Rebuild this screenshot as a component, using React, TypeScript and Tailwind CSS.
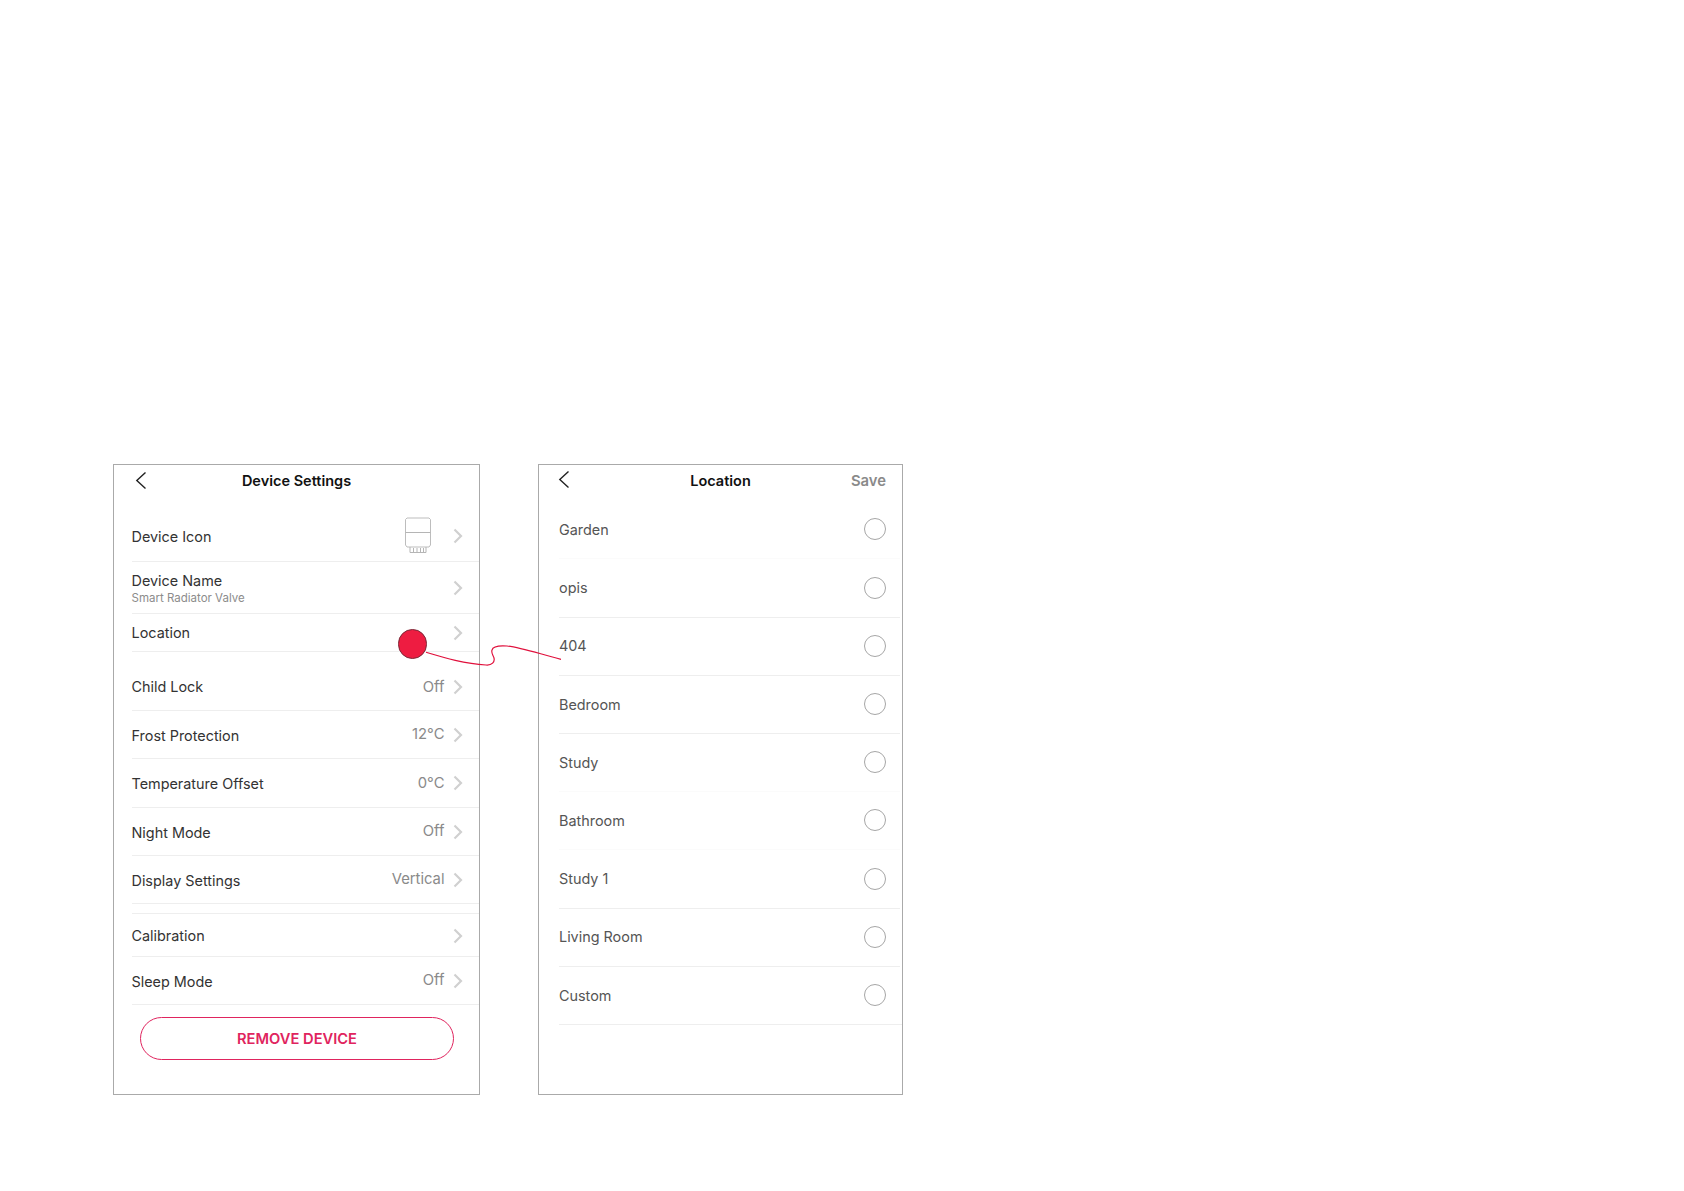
const font = "font-['Inter','Liberation_Sans',sans-serif]";

function Chevron() {
  return (
    <svg width="10" height="16" viewBox="0 0 10 16" fill="none" className="shrink-0">
      <path d="M1.500 1.500 8 8 1.500 14.500" stroke="#d0d0d0" strokeWidth="2.200" />
    </svg>
  );
}

function Back() {
  return (
    <svg width="12" height="18" viewBox="0 0 12 18" fill="none" className="shrink-0">
      <path d="M10.500 .5 1.800 8.500 10.500 16.500" stroke="#222" strokeWidth="1.400" />
    </svg>
  );
}

function ValveIcon() {
  return (
    <svg width="28" height="38" viewBox="0 0 28 38" fill="none" className="shrink-0">
      <path d="M3 1h22l1.500 1.500V28L25 30H3l-1.500-2V2.500Z" stroke="#bdbdbd" strokeWidth="1" />
      <path d="M1.500 15.500h25" stroke="#b5b5b5" strokeWidth="1" />
      <path d="M6 30v5.500h16V30M9.500 31v4M13 31v4M16.500 31v4M19.500 31v4" stroke="#b5b5b5" strokeWidth="1" />
    </svg>
  );
}

function Row({ label, value, sub, h, icon, labelClass = "" }: { label: string; value?: string; sub?: string; h: string; icon?: boolean; labelClass?: string }) {
  return (
    <div className={`${h} ml-[17.500px] flex items-center pr-[16px] border-b border-[#eeeeee]`}>
      <div className="flex-1 min-w-0">
        <div className={`text-[14.400px] leading-[18px] text-[#333] ${labelClass}`}>{label}</div>
        {sub && <div className="mt-[1px] text-[11.500px] leading-[14px] text-[#8c8c8c]">{sub}</div>}
      </div>
      {icon && <div className="mr-[21px]"><ValveIcon /></div>}
      {value && <span className="mr-[8.500px] text-[14.800px] text-[#8a8a8a]">{value}</span>}
      <Chevron />
    </div>
  );
}

function Radio({ label, line, last }: { label: string; line?: boolean; last?: boolean }) {
  return (
    <div className={`h-[58.200px] ml-[20px] flex items-center ${last ? "pr-[16px]" : "mr-[2px] pr-[14px]"} ${line ? "border-b border-[#eeeeee]" : "border-b border-[#fbfbfb]"}`}>
      <span className="flex-1 text-[14.400px] text-[#555]">{label}</span>
      <span className="w-[22px] h-[22px] -mt-[1px] rounded-full border-[1.500px] border-[#a6a6a6]" />
    </div>
  );
}

export default function App() {
  return (
    <div className={`relative w-[1684px] h-[1191px] bg-white overflow-hidden ${font}`}>
      <div className="flex items-start pt-[464px] pl-[113px] gap-[58px]">
        <section className="w-[367px] h-[631px] shrink-0 border border-[#aaaaaa] bg-white">
          <header className="h-[46px] relative flex items-start justify-center">
            <div className="absolute left-[21px] top-[7px]"><Back /></div>
            <h1 className="mt-[7px] text-[14.500px] leading-[18px] font-semibold text-[#111]">Device Settings</h1>
          </header>
          <Row label="Device Icon" h="h-[51px]" icon labelClass="mt-[1px]" />
          <Row label="Device Name" sub="Smart Radiator Valve" h="h-[52px]" labelClass="mt-[1px]" />
          <Row label="Location" h="h-[38px]" />
          <Row label="Child Lock" value="Off" h="h-[59px] pt-[12px]" />
          <Row label="Frost Protection" value="12°C" h="h-[48px]" labelClass="mt-[2px]" />
          <Row label="Temperature Offset" value="0°C" h="h-[49px]" labelClass="mt-[2px]" />
          <Row label="Night Mode" value="Off" h="h-[48px]" labelClass="mt-[2px]" />
          <Row label="Display Settings" value="Vertical" h="h-[48px]" labelClass="mt-[2px]" />
          <div className="h-[10px] ml-[17.500px] border-b border-[#eeeeee]" />
          <Row label="Calibration" h="h-[43px] pt-[2px]" />
          <Row label="Sleep Mode" value="Off" h="h-[48px]" labelClass="mt-[2px]" />
          <div className="mt-[12px] ml-[26px] mr-[25px] h-[43px] pt-[2px] rounded-full border border-[#e0245e] flex items-center justify-center text-[14.700px] font-semibold text-[#e0245e]">
            REMOVE DEVICE
          </div>
        </section>

        <section className="w-[365px] h-[631px] shrink-0 border border-[#aaaaaa] bg-white">
          <header className="h-[36.300px] relative flex items-start justify-center">
            <div className="absolute left-[19px] top-[6px]"><Back /></div>
            <h1 className="mt-[7px] text-[14.500px] leading-[18px] font-semibold text-[#111]">Location</h1>
            <span className="absolute right-[16px] top-[7px] text-[14.800px] leading-[18px] font-semibold text-[#8a8a8a]">Save</span>
          </header>
          <Radio label="Garden" />
          <Radio label="opis" line />
          <Radio label="404" line />
          <Radio label="Bedroom" line />
          <Radio label="Study" />
          <Radio label="Bathroom" />
          <Radio label="Study 1" line />
          <Radio label="Living Room" line />
          <Radio label="Custom" line last />
        </section>
      </div>

      <span className="absolute left-[397.500px] top-[629px] w-[29.500px] h-[29.500px] rounded-full bg-[#ee1c41] border border-[#7a2a38]" />
      <svg className="absolute left-[420px] top-[640px]" width="150" height="40" viewBox="0 0 150 40" fill="none">
        <path d="M6 12.300C25 18 45 24 66 25C72 25.500 75 22 74 18C73 15 71 13 72 10C73 6 80 5.500 87 6C100 7 120 14 141 19.300" stroke="#e0103c" strokeWidth="1.200" />
      </svg>
    </div>
  );
}
